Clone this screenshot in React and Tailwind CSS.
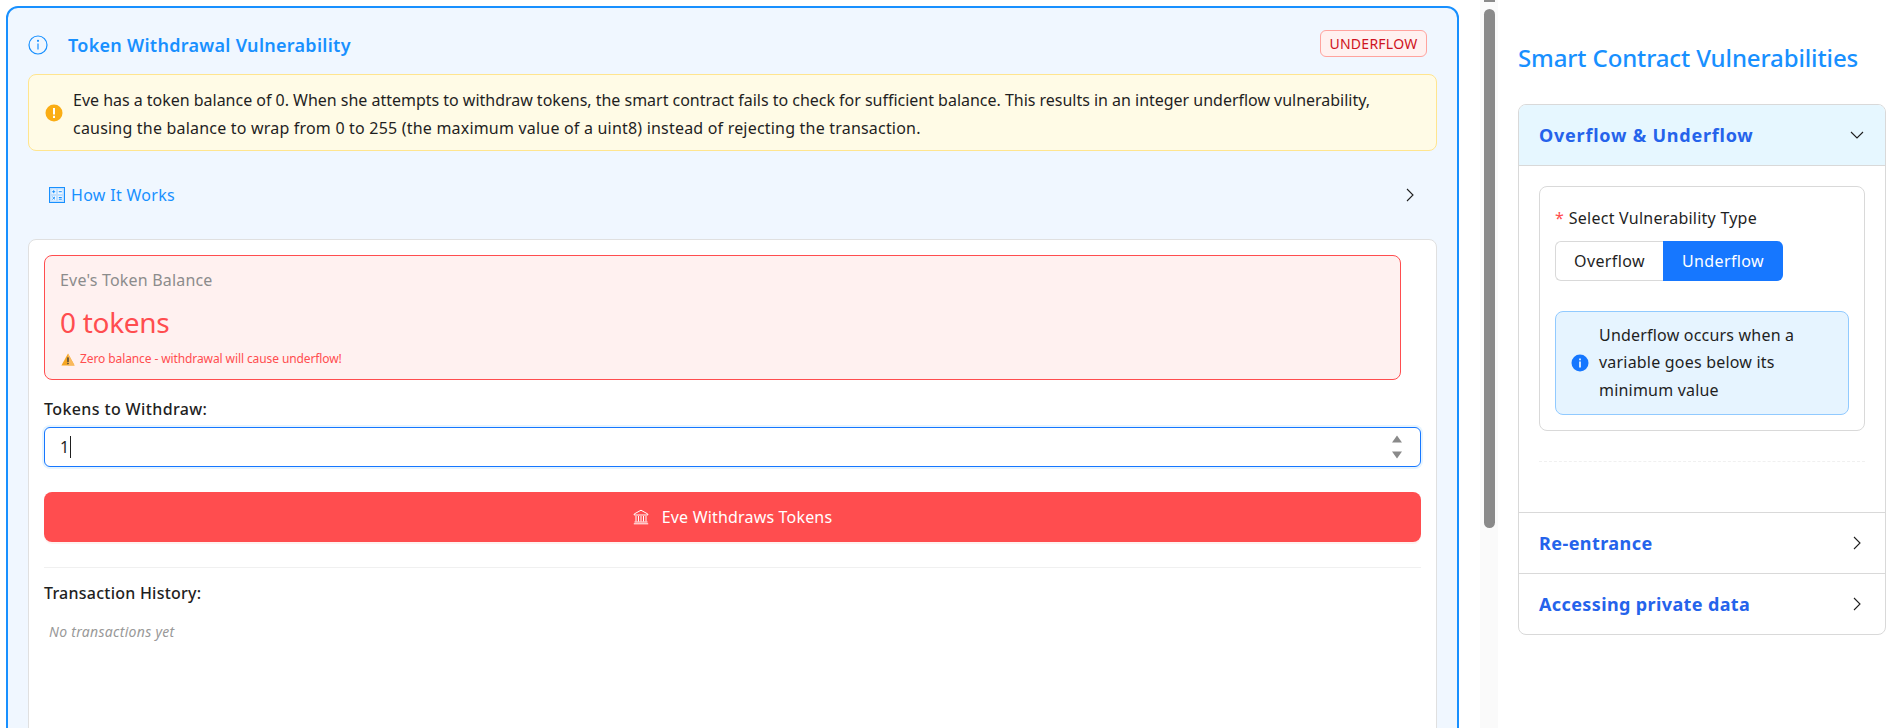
import React from "react";

const Chevron = ({ dir = "right", className = "" }) => (
  <svg width="14" height="14" viewBox="0 0 14 14" fill="none" stroke="#1f1f1f" strokeWidth="1.1" className={className}>
    {dir === "right" ? <path d="M4 1 10 7l-6 6" /> : <path d="M1 4l6 6 6-6" />}
  </svg>
);

const CalcIcon = () => (
  <svg width="16" height="16" viewBox="0 0 16 16" fill="none">
    <rect x="0.5" y="0.5" width="15" height="15" fill="#bfdfff" stroke="#1890ff" />
    <rect x="2.5" y="2.5" width="4.5" height="4.5" fill="#f0f7ff" />
    <rect x="9" y="2.5" width="4.5" height="4.5" fill="#f0f7ff" />
    <rect x="2.5" y="9" width="4.5" height="4.5" fill="#f0f7ff" />
    <rect x="9" y="9" width="4.5" height="4.5" fill="#f0f7ff" />
    <path d="M3.2 4.7h3M4.7 3.2v3M9.8 4.7h3M3.4 9.8l2.6 2.6M6 9.8l-2.6 2.6M9.8 10.5h3M9.8 12.2h3" stroke="#1890ff" strokeWidth="1" />
  </svg>
);

const BankIcon = () => (
  <svg width="16" height="16" viewBox="0 0 16 16" fill="none" stroke="#fff" strokeWidth="1">
    <path d="M1.2 5 8 1.2 14.8 5v1H1.2z" />
    <path d="M3 7v5.5M5.5 7v5.5M8 7v5.5M10.5 7v5.5M13 7v5.5M1.5 13h13M0.8 14.8h14.4" />
  </svg>
);

const WarnTriangle = () => (
  <svg width="14" height="13" viewBox="0 0 14 13">
    <path d="M7 .6 13.6 12.4H.4z" fill="#f5a623" />
    <path d="M7 .6 13.6 12.4H7z" fill="#f9b95c" />
    <rect x="6.3" y="4.4" width="1.4" height="4.6" fill="#3b3b3b" />
    <rect x="6.3" y="9.8" width="1.4" height="1.4" fill="#3b3b3b" />
  </svg>
);

const sideTitle = "text-[18px] font-bold text-[#2563eb]";

export default function App() {
  return (
    <div className="flex h-[728px] w-[1896px] overflow-hidden bg-white font-['Noto_Sans',sans-serif] text-[16px] text-[#1f1f1f]">
      <main className="w-[1480px] shrink-0 pl-[6px] pr-[21px] pt-[6px]">
        <section className="h-[900px] rounded-t-[12px] border-2 border-[#1890ff] bg-[#f0f7ff] px-5">
          <div className="mt-[22px] flex h-[27px] items-center justify-between pr-[10px]">
            <div className="flex items-center">
              <svg width="20" height="20" viewBox="0 0 20 20" fill="none" stroke="#1890ff" strokeWidth="1.2" className="mt-[2px]">
                <circle cx="10" cy="10" r="9" />
                <path d="M10 8.5v6" />
                <circle cx="10" cy="5.8" r=".5" fill="#1890ff" />
              </svg>
              <h2 className="ml-5 mt-[3px] text-[18px] font-semibold tracking-[0.28px] text-[#1890ff]">Token Withdrawal Vulnerability</h2>
            </div>
            <span className="flex h-[27px] w-[107px] items-center justify-center rounded-[6px] border border-[#ffa39e] bg-[#fff1f0] text-[14px] tracking-[0.25px] text-[#cf1322]">UNDERFLOW</span>
          </div>
          <div className="mt-[17px] flex h-[77px] items-center rounded-[8px] border border-[#ffe58f] bg-[#fffbe6] pl-4">
            <svg width="18" height="18" viewBox="0 0 18 18" className="mr-[10px] shrink-0">
              <circle cx="9" cy="9" r="8.5" fill="#faad14" />
              <rect x="8" y="4" width="2" height="6.5" fill="#fff" />
              <rect x="8" y="11.8" width="2" height="2.2" fill="#fff" />
            </svg>
            <p className="pt-[2px] leading-[28px]">
              <span className="tracking-[-0.02px]">Eve has a token balance of 0. When she attempts to withdraw tokens, the smart contract fails to check for sufficient balance. This results in an integer underflow vulnerability,</span>
              <br />
              <span className="tracking-[0.2px]">causing the balance to wrap from 0 to 255 (the maximum value of a uint8) instead of rejecting the transaction.</span>
            </p>
          </div>
          <div className="flex h-[88px] items-center justify-between pl-[21px] pr-[20px]">
            <div className="flex items-center gap-[6px] text-[#1890ff]">
              <CalcIcon />
              <span className="tracking-[0.3px]">How It Works</span>
            </div>
            <Chevron />
          </div>
          <div className="h-[600px] rounded-t-[8px] border border-[#e0e0e0] bg-white px-[15px] pt-[15px]">
            <div className="h-[125px] w-[1357px] rounded-[8px] border border-[#ff4d4f] bg-[#fff1f0] pl-[15px] pt-[12px]">
              <div className="leading-[24px] tracking-[0.19px] text-[#8c8c8c]">Eve's Token Balance</div>
              <div className="mt-[10px] text-[28px] leading-[40px] tracking-[-0.3px] text-[#ff4d4f]">0 tokens</div>
              <div className="mt-[7px] flex items-center gap-[5px] pl-[1px] text-[12px] leading-[20px] tracking-[-0.1px] text-[#ff4d4f]">
                <WarnTriangle />
                <span>Zero balance - withdrawal will cause underflow!</span>
              </div>
            </div>
            <label className="mt-[17px] block font-medium leading-[24px] tracking-[0.38px]">Tokens to Withdraw:</label>
            <div className="mt-[6px] flex h-[40px] items-center justify-between rounded-[6px] border border-[#1677ff] bg-white pl-[15px] pr-[16px] shadow-[0_0_0_2px_rgba(5,145,255,0.1)]">
              <span className="flex items-center">
                1<span className="ml-[1px] h-[22px] w-px bg-[#1f1f1f]" />
              </span>
              <svg width="14" height="28" viewBox="0 0 14 28" fill="#8a8a8a">
                <path d="M7 2.5 12 9.5H2zM2 18.5h10L7 25.5z" />
              </svg>
            </div>
            <button className="mt-[25px] flex h-[50px] w-full items-center justify-center gap-[13px] rounded-[8px] bg-[#ff4d4f] text-white shadow-[0_2px_0_rgba(255,38,5,0.06)]">
              <BankIcon />
              <span className="tracking-[0.18px]">Eve Withdraws Tokens</span>
            </button>
            <div className="mt-[25px] border-t border-[#f0f0f0]" />
            <div className="mt-[13px] font-medium leading-[24px] tracking-[0.24px]">Transaction History:</div>
            <div className="mt-[16px] pl-[5px] text-[14px] italic leading-[22px] tracking-[0.3px] text-[#999999]">No transactions yet</div>
          </div>
        </section>
      </main>

      <div className="w-[18px] shrink-0 bg-[#fafafa]">
        <div className="mx-auto h-[2px] w-[11px] bg-[#8a8a8a]" />
        <div className="mx-auto mt-[7px] h-[519px] w-[11px] rounded-[6px] bg-[#8a8a8a]" />
      </div>

      <aside className="flex-1 pl-[20px] pr-[10px] pt-[42px]">
        <h1 className="text-[24px] font-medium leading-[32px] tracking-[-0.12px] text-[#1890ff]">Smart Contract Vulnerabilities</h1>
        <div className="mt-[30px] overflow-hidden rounded-[8px] border border-[#d9d9d9]">
          <div className="flex h-[61px] items-center justify-between border-b border-[#d9d9d9] bg-[#e6f7ff] pl-[20px] pr-[21px]">
            <span className={`${sideTitle} tracking-[0.78px]`}>Overflow &amp; Underflow</span>
            <Chevron dir="down" />
          </div>
          <div className="h-[347px] border-b border-[#d9d9d9] px-[20px] pt-[20px]">
            <div className="h-[245px] rounded-[8px] border border-[#d9d9d9] px-[15px] pt-[19px]">
              <div className="flex h-[24px] items-center">
                <span className="mr-[5px] text-[#ff4d4f]">*</span>
                <span className="tracking-[0.24px]">Select Vulnerability Type</span>
              </div>
              <div className="mt-[11px] flex h-[40px] w-fit">
                <div className="flex w-[108px] items-center justify-center rounded-l-[6px] border border-r-0 border-[#d9d9d9] bg-white tracking-[0.4px]">Overflow</div>
                <div className="flex w-[120px] items-center justify-center rounded-r-[6px] bg-[#1677ff] tracking-[0.4px] text-white">Underflow</div>
              </div>
              <div className="mt-[30px] flex h-[104px] items-center rounded-[8px] border border-[#91caff] bg-[#e6f4ff] px-[15px]">
                <svg width="18" height="18" viewBox="0 0 18 18" className="mr-[10px] shrink-0">
                  <circle cx="9" cy="9" r="8.5" fill="#1677ff" />
                  <rect x="8.2" y="7.5" width="1.6" height="6" fill="#fff" />
                  <rect x="8.2" y="4.5" width="1.6" height="1.8" fill="#fff" />
                </svg>
                <p className="leading-[27.5px] tracking-[0.2px]">Underflow occurs when a variable goes below its minimum value</p>
              </div>
            </div>
            <div className="mt-[30px] border-t border-dashed border-[#f0f0f0]" />
          </div>
          <div className="flex h-[61px] items-center justify-between border-b border-[#d9d9d9] pl-[20px] pr-[21px]">
            <span className={`${sideTitle} tracking-[0.44px]`}>Re-entrance</span>
            <Chevron />
          </div>
          <div className="flex h-[60px] items-center justify-between pl-[20px] pr-[21px]">
            <span className={`${sideTitle} tracking-[0.38px]`}>Accessing private data</span>
            <Chevron />
          </div>
        </div>
      </aside>
    </div>
  );
}
